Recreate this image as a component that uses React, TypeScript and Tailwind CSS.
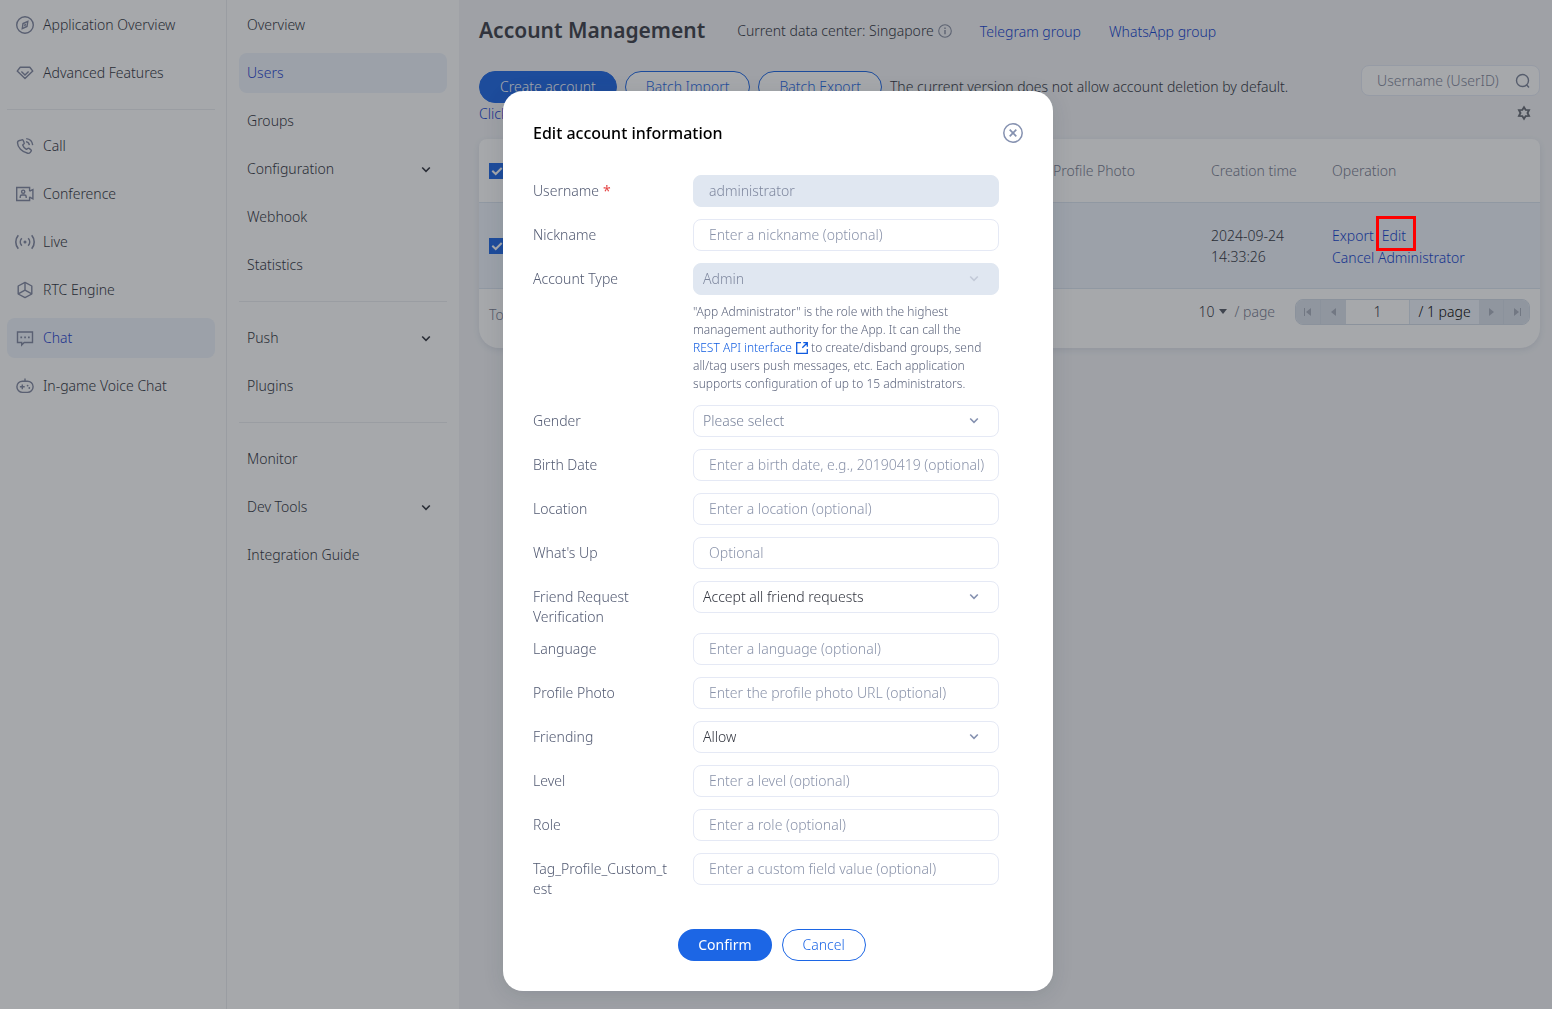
import React, { useState } from "react";

type IconProps = { children: React.ReactNode; size?: number; className?: string };

function Svg({ children, size = 20, className = "" }: IconProps) {
  return (
    <svg
      width={size}
      height={size}
      viewBox={`0 0 ${size} ${size}`}
      fill="none"
      stroke="currentColor"
      strokeWidth="1.4"
      aria-hidden="true"
      className={`shrink-0 ${className}`}
    >
      {children}
    </svg>
  );
}

const CompassIcon = () => (
  <Svg>
    <circle cx="10" cy="10" r="8.3" />
    <path d="M12.8 6.4 8 8.6 7.3 13.6 12 11.4Z" />
    <path d="M10.4 8.8 9.7 11.2" />
  </Svg>
);

const GemIcon = () => (
  <Svg>
    <path d="M5.2 4.2h9.6l3 3.9L10 15.4 2.2 8.1Z" strokeLinejoin="round" />
    <path d="M6.4 8.6 10 12l3.6-3.4" />
  </Svg>
);

const CallIcon = () => (
  <Svg>
    <path
      d="M5.4 4.3 7 3.8c.5-.1.9.1 1.1.5l1.1 2.4c.2.4.1.8-.2 1.1L7.7 9c.6 1.900 1.900 3.400 3.700 4.400l1.500-1c.4-.3.8-.3 1.200 0l1.900 1.500c.4.3.5.8.2 1.200l-.9 1.200c-.6.8-1.600 1.200-2.600 1C7 16.200 2.600 11.400 2.500 6.700c0-1.100.9-2.100 2.900-2.400Z"
      strokeLinejoin="round"
    />
    <path d="M11 5.600c1.800.3 3.100 1.700 3.400 3.600M11.200 2.600c3.500.3 6.100 2.900 6.500 6.600" />
  </Svg>
);

const ConferenceIcon = () => (
  <Svg>
    <path d="M14.600 7.200V3.500H1.700v13h12.900v-3.700" />
    <path d="M14.600 7.200l3.300-1.500v9.100l-3.300-1.600" />
    <circle cx="8.200" cy="7.700" r="1.600" />
    <path d="M5.200 14v-1.300c0-1 .8-1.700 1.800-1.700h2.400c1 0 1.800.7 1.800 1.700V14" />
  </Svg>
);

const LiveIcon = () => (
  <Svg>
    <circle cx="10" cy="10" r="1.500" fill="currentColor" stroke="none" />
    <path
      d="M6.800 6.300a5.400 5.400 0 0 0 0 7.400M13.200 6.300a5.400 5.400 0 0 1 0 7.400M3.300 3.200a10.500 10.500 0 0 0 0 13.600M16.700 3.200a10.500 10.500 0 0 1 0 13.600"
      strokeWidth="1.600"
    />
  </Svg>
);

const RtcIcon = () => (
  <Svg>
    <path d="M10 2.400 16.800 6v8L10 17.600 3.200 14V6Z" strokeLinejoin="round" />
    <path d="M10 2.400v7.800M10 10.200l-6.800 3.600M10 10.200l6.800 3.600" />
  </Svg>
);

const ChatIcon = () => (
  <Svg>
    <path d="M2.500 4h15v10.500H9.200L6.700 17v-2.500H2.500Z" />
    <path d="M5.400 9.300h1.700M9.200 9.300h1.700M13 9.300h1.700" strokeWidth="1.700" />
  </Svg>
);

const GameIcon = () => (
  <Svg>
    <rect x="1.900" y="5.200" width="16.200" height="11.200" rx="5.600" />
    <path d="M10 2.400v2.800M7.300 8.400v4.800M4.900 10.800h4.800" />
    <circle cx="12.600" cy="9.600" r=".9" fill="currentColor" stroke="none" />
    <circle cx="14.300" cy="12" r=".9" fill="currentColor" stroke="none" />
  </Svg>
);

function Chevron({ className = "" }: { className?: string }) {
  return (
    <Svg size={12} className={className}>
      <path d="M2.200 4.500 6 8.300 9.800 4.500" strokeWidth="1.600" />
    </Svg>
  );
}

type Item = { label: string; icon?: React.ReactNode; active?: boolean; expandable?: boolean };

function NavItem({ item }: { item: Item }) {
  return (
    <li>
      <a
        href="#"
        aria-current={item.active ? "page" : undefined}
        className={`flex h-10 items-center gap-2 rounded-lg pr-[15px] pl-2 ${
          item.active ? "bg-[#eef4fc] text-[#1f3fd0]" : "text-[#30333d]"
        }`}
      >
        {item.icon && <span className="text-[#8087a0]">{item.icon}</span>}
        <span className="grow whitespace-nowrap">{item.label}</span>
        {item.expandable && <Chevron />}
      </a>
    </li>
  );
}

function NavGroups({ groups }: { groups: Item[][] }) {
  return (
    <>
      {groups.map((group, i) => (
        <ul
          key={i}
          className={`flex flex-col gap-2 ${i > 0 ? "mt-4 border-t border-[#ebedf0] pt-4" : ""}`}
        >
          {group.map((item) => (
            <NavItem key={item.label} item={item} />
          ))}
        </ul>
      ))}
    </>
  );
}

const productNav: Item[][] = [
  [
    { label: "Application Overview", icon: <CompassIcon /> },
    { label: "Advanced Features", icon: <GemIcon /> },
  ],
  [
    { label: "Call", icon: <CallIcon /> },
    { label: "Conference", icon: <ConferenceIcon /> },
    { label: "Live", icon: <LiveIcon /> },
    { label: "RTC Engine", icon: <RtcIcon /> },
    { label: "Chat", icon: <ChatIcon />, active: true },
    { label: "In-game Voice Chat", icon: <GameIcon /> },
  ],
];

const chatNav: Item[][] = [
  [
    { label: "Overview" },
    { label: "Users", active: true },
    { label: "Groups" },
    { label: "Configuration", expandable: true },
    { label: "Webhook" },
    { label: "Statistics" },
  ],
  [{ label: "Push", expandable: true }, { label: "Plugins" }],
  [{ label: "Monitor" }, { label: "Dev Tools", expandable: true }, { label: "Integration Guide" }],
];

function Pill({ primary, children }: { primary?: boolean; children: React.ReactNode }) {
  return (
    <button
      type="button"
      className={`h-8 rounded-full border border-[#1c66e5] px-5 whitespace-nowrap ${
        primary ? "bg-[#1c66e5] text-white" : "bg-white text-[#1c66e5]"
      }`}
    >
      {children}
    </button>
  );
}

function Check({ label }: { label: string }) {
  return (
    <span className="relative flex size-4">
      <input
        type="checkbox"
        defaultChecked
        aria-label={label}
        className="size-4 appearance-none bg-[#1c66e5]"
      />
      <svg
        viewBox="0 0 16 16"
        className="pointer-events-none absolute inset-0 size-4"
        fill="none"
        stroke="white"
        strokeWidth="2"
        aria-hidden="true"
      >
        <path d="M3.300 7.800 6.700 11l6-6" />
      </svg>
    </span>
  );
}

function PagerButton({ label, path, className = "" }: { label: string; path: string; className?: string }) {
  return (
    <button
      type="button"
      aria-label={label}
      className={`flex w-[25px] items-center justify-center border-[#d2dae6] bg-[#dbe2ec] text-[#a8afbd] ${className}`}
    >
      <svg width="10" height="10" viewBox="0 0 10 10" fill="currentColor" aria-hidden="true">
        <path d={path} />
      </svg>
    </button>
  );
}

function AccountTable() {
  return (
    <section className="mt-[14px] rounded-t-lg rounded-b-[20px] bg-white shadow-[0_2px_6px_rgba(60,80,120,0.12)]">
      <table className="w-full table-fixed text-left">
        <colgroup>
          <col className="w-[38px]" />
          <col />
          <col />
          <col />
          <col className="w-[158px]" />
          <col className="w-[121px]" />
          <col className="w-[218px]" />
        </colgroup>
        <thead>
          <tr className="h-[63px] border-b border-[#dbe4f0] text-[#777c90]">
            <th className="pt-[2px] pl-[10px]">
              <Check label="Select all accounts" />
            </th>
            <th className="pt-[2px] font-light">Username</th>
            <th className="pt-[2px] font-light">Nickname</th>
            <th className="pt-[2px] font-light">Account Type</th>
            <th className="pt-[2px] pl-[10px] font-light">Profile Photo</th>
            <th className="pt-[2px] pl-[10px] font-light">Creation time</th>
            <th className="pt-[2px] pl-[10px] font-light">Operation</th>
          </tr>
        </thead>
        <tbody>
          <tr className="h-[86px] border-b border-[#dbe4f0] bg-[#eef4fc] text-[#30333d]">
            <td className="pt-[2px] pl-[10px]">
              <Check label="Select administrator" />
            </td>
            <td />
            <td />
            <td />
            <td />
            <td className="pt-[2px] pl-[10px] leading-[21px]">2024-09-24 14:33:26</td>
            <td className="pt-1 pl-[10px] leading-[22px] text-[#1040d0]">
              <a href="#" className="mr-2">
                Export
              </a>
              <a href="#" className="relative">
                Edit
                <span className="absolute -top-[10px] -right-[10px] -bottom-[6px] -left-[6px] z-50 border-3 border-[#ff0000]" />
              </a>
              <br />
              <a href="#">Cancel Administrator</a>
            </td>
          </tr>
        </tbody>
      </table>
      <footer className="flex h-[59px] items-start justify-between px-[10px] pt-[10px]">
        <span className="pt-1 leading-6 text-[#777c90]">Total items: 1</span>
        <div className="flex h-[26px] items-center">
          <label className="flex items-center gap-2 text-[#777c90]">
            <span className="relative flex items-center">
              <select aria-label="Items per page" className="w-7 appearance-none text-[#30333d]">
                <option>10</option>
              </select>
              <svg width="8" height="5" viewBox="0 0 8 5" className="pointer-events-none absolute right-0" aria-hidden="true">
                <path d="M0 0h8L4 5Z" fill="#555a66" />
              </svg>
            </span>
            / page
          </label>
          <div className="ml-5 flex h-[26px] overflow-hidden rounded-lg border border-[#d2dae6] bg-[#eef4fc]">
            <PagerButton label="First page" path="M1 1h1v8H1ZM8 1v8L3 5Z" className="border-r" />
            <PagerButton label="Previous page" path="M7 1v8L2 5Z" />
            <input aria-label="Page number" defaultValue="1" className="w-[63px] bg-white text-center text-[#30333d]" />
            <span className="flex w-[70px] items-center justify-center border-l border-[#dbe4f0] text-black">
              / 1 page
            </span>
            <PagerButton label="Next page" path="M3 1v8l5-4Z" className="border-r" />
            <PagerButton label="Last page" path="M8 1h1v8H8ZM2 1v8l5-4Z" />
          </div>
        </div>
      </footer>
    </section>
  );
}

type Field = {
  label: string;
  placeholder?: string;
  value?: string;
  select?: boolean;
  disabled?: boolean;
  required?: boolean;
  muted?: boolean;
  help?: React.ReactNode;
};

const roleHelp = (
  <p className="mt-2 text-xs leading-[18px] text-[#5d657d]">
    "App Administrator" is the role with the highest management authority for the App. It can call the{" "}
    <a href="#" className="inline-flex items-center gap-1 align-top whitespace-nowrap text-[#0f5be0]">
      REST API interface
      <svg
        width="12"
        height="12"
        viewBox="0 0 12 12"
        fill="none"
        stroke="currentColor"
        strokeWidth="1.300"
        aria-hidden="true"
      >
        <path d="M5 .7H.7v10.600h10.600V7M7.300.7h4v4M11.300.7 6.300 5.700" />
      </svg>
    </a>{" "}
    to create/disband groups, send all/tag users push messages, etc. Each application supports configuration of up to 15
    administrators.
  </p>
);

const fields: Field[] = [
  { label: "Username", value: "administrator", disabled: true, required: true },
  { label: "Nickname", placeholder: "Enter a nickname (optional)" },
  { label: "Account Type", value: "Admin", select: true, disabled: true, help: roleHelp },
  { label: "Gender", value: "Please select", select: true, muted: true },
  { label: "Birth Date", placeholder: "Enter a birth date, e.g., 20190419 (optional)" },
  { label: "Location", placeholder: "Enter a location (optional)" },
  { label: "What's Up", placeholder: "Optional" },
  { label: "Friend Request Verification", value: "Accept all friend requests", select: true },
  { label: "Language", placeholder: "Enter a language (optional)" },
  { label: "Profile Photo", placeholder: "Enter the profile photo URL (optional)" },
  { label: "Friending", value: "Allow", select: true },
  { label: "Level", placeholder: "Enter a level (optional)" },
  { label: "Role", placeholder: "Enter a role (optional)" },
  { label: "Tag_Profile_Custom_test", placeholder: "Enter a custom field value (optional)" },
];

function FormRow({ field }: { field: Field }) {
  const id = field.label.toLowerCase().replace(/[^a-z]+/g, "-");
  const box = `h-8 w-full rounded-lg border placeholder:text-[#8a93aa] ${
    field.disabled ? "border-[#e0e7f1] bg-[#e0e7f1] text-[#7f889f] opacity-100" : "border-[#e5e9f5] bg-white"
  }`;
  return (
    <div className="flex">
      <label htmlFor={id} className="w-[160px] shrink-0 py-[6px] pr-5 leading-5 wrap-anywhere text-[#525a72]">
        {field.label}
        {field.required && <span className="ml-1 font-normal text-[#e54545]">*</span>}
      </label>
      <div className="w-[306px] pb-3">
        {field.select ? (
          <div className="relative">
            <select
              id={id}
              disabled={field.disabled}
              className={`${box} appearance-none px-[9px] ${
                field.disabled ? "" : field.muted ? "text-[#7a849c]" : "text-[#30333d]"
              }`}
            >
              <option>{field.value}</option>
            </select>
            <Chevron
              className={`pointer-events-none absolute top-[9px] right-[19px] ${
                field.disabled ? "text-[#c3cad8]" : "text-[#8591b0]"
              }`}
            />
          </div>
        ) : (
          <input
            id={id}
            disabled={field.disabled}
            defaultValue={field.value}
            placeholder={field.placeholder}
            className={`${box} pr-2 pb-[2px] pl-[15px]`}
          />
        )}
        {field.help}
      </div>
    </div>
  );
}

function EditDialog({ onClose }: { onClose: () => void }) {
  return (
    <div className="fixed inset-0 z-40 flex items-start justify-center overflow-hidden bg-[rgba(32,37,45,0.4)] pt-[91px] pl-1">
      <form
        role="dialog"
        aria-labelledby="edit-title"
        onSubmit={(e) => e.preventDefault()}
        className="w-[550px] rounded-[20px] bg-white p-[30px] shadow-[0_4px_20px_rgba(40,50,70,0.15)]"
      >
        <header className="mb-[30px] flex h-6 items-center justify-between">
          <h2 id="edit-title" className="text-base font-medium text-black">
            Edit account information
          </h2>
          <button type="button" aria-label="Close" onClick={onClose} className="text-[#8591b0]">
            <Svg>
              <circle cx="10" cy="10" r="9.200" strokeWidth="1.500" />
              <path d="M6.700 6.700l6.600 6.600M13.300 6.700l-6.600 6.600" strokeWidth="1.700" />
            </Svg>
          </button>
        </header>
        {fields.map((f) => (
          <FormRow key={f.label} field={f} />
        ))}
        <div className="mt-6 flex justify-center gap-[10px] pr-3">
          <button type="submit" className="h-8 rounded-full bg-[#1c66e5] px-5 font-normal text-white">
            Confirm
          </button>
          <Pill>Cancel</Pill>
        </div>
      </form>
    </div>
  );
}

export default function App() {
  const [open, setOpen] = useState(true);
  return (
    <div className="flex min-h-screen bg-[#f3f4f7] font-['Noto_Sans',sans-serif] text-sm font-light">
      <nav aria-label="Products" className="w-[227px] shrink-0 border-r border-[#ebedf0] bg-white pt-[5px] pr-[11px] pl-[7px]">
        <NavGroups groups={productNav} />
      </nav>
      <nav aria-label="Chat" className="w-[232px] shrink-0 bg-white px-3 pt-[5px]">
        <NavGroups groups={chatNav} />
      </nav>
      <main className="min-w-0 grow pt-4 pr-3 pl-5">
        <header className="flex h-7 items-center">
          <h1 className="text-[21px] font-semibold text-[#3c3f48]">Account Management</h1>
          <p className="ml-8 flex items-center gap-1 pt-[2px] text-[#30333d]">
            Current data center: Singapore
            <Svg size={14} className="text-[#868ca0]">
              <circle cx="7" cy="7" r="6.300" strokeWidth="1.100" />
              <path d="M7 6v4.300M7 3.500v1.400" />
            </Svg>
          </p>
          <a href="#" className="ml-7 pt-1 text-[#1040d0]">
            Telegram group
          </a>
          <a href="#" className="ml-7 pt-1 text-[#1040d0]">
            WhatsApp group
          </a>
        </header>
        <div className="mt-[21px] flex items-start justify-between">
          <div className="pt-[6px] text-[#30333d]">
            <div className="flex items-center gap-2">
              <Pill primary>Create account</Pill>
              <Pill>Batch Import</Pill>
              <Pill>Batch Export</Pill>
              <span>The current version does not allow account deletion by default.</span>
            </div>
            <a href="#" className="block leading-[22px] text-[#1040d0]">
              Click here
            </a>
          </div>
          <div className="flex flex-col items-end gap-[9px]">
            <label className="flex h-[31px] w-[179px] items-center rounded-lg border border-[#e5e9f5] bg-white pr-2 pl-[15px]">
              <input
                aria-label="Search accounts"
                placeholder="Username (UserID)"
                className="w-full min-w-0 placeholder:text-[#80869a]"
              />
              <Svg size={16} className="text-[#7b8398]">
                <circle cx="7.500" cy="7.500" r="6" />
                <path d="M11.500 11.700 14 14.500" />
              </Svg>
            </label>
            <button type="button" aria-label="Table settings" className="mr-2 text-[#666a74]">
              <Svg size={16}>
                <path
                  d="M8 2.200 9.700 4.900 13 5.100 11.500 8l1.500 2.900-3.300.2L8 13.800l-1.700-2.700-3.300-.2L4.500 8 3 5.100l3.300-.2Z"
                  strokeWidth="1.900"
                />
              </Svg>
            </button>
          </div>
        </div>
        <AccountTable />
      </main>
      {open && <EditDialog onClose={() => setOpen(false)} />}
    </div>
  );
}
